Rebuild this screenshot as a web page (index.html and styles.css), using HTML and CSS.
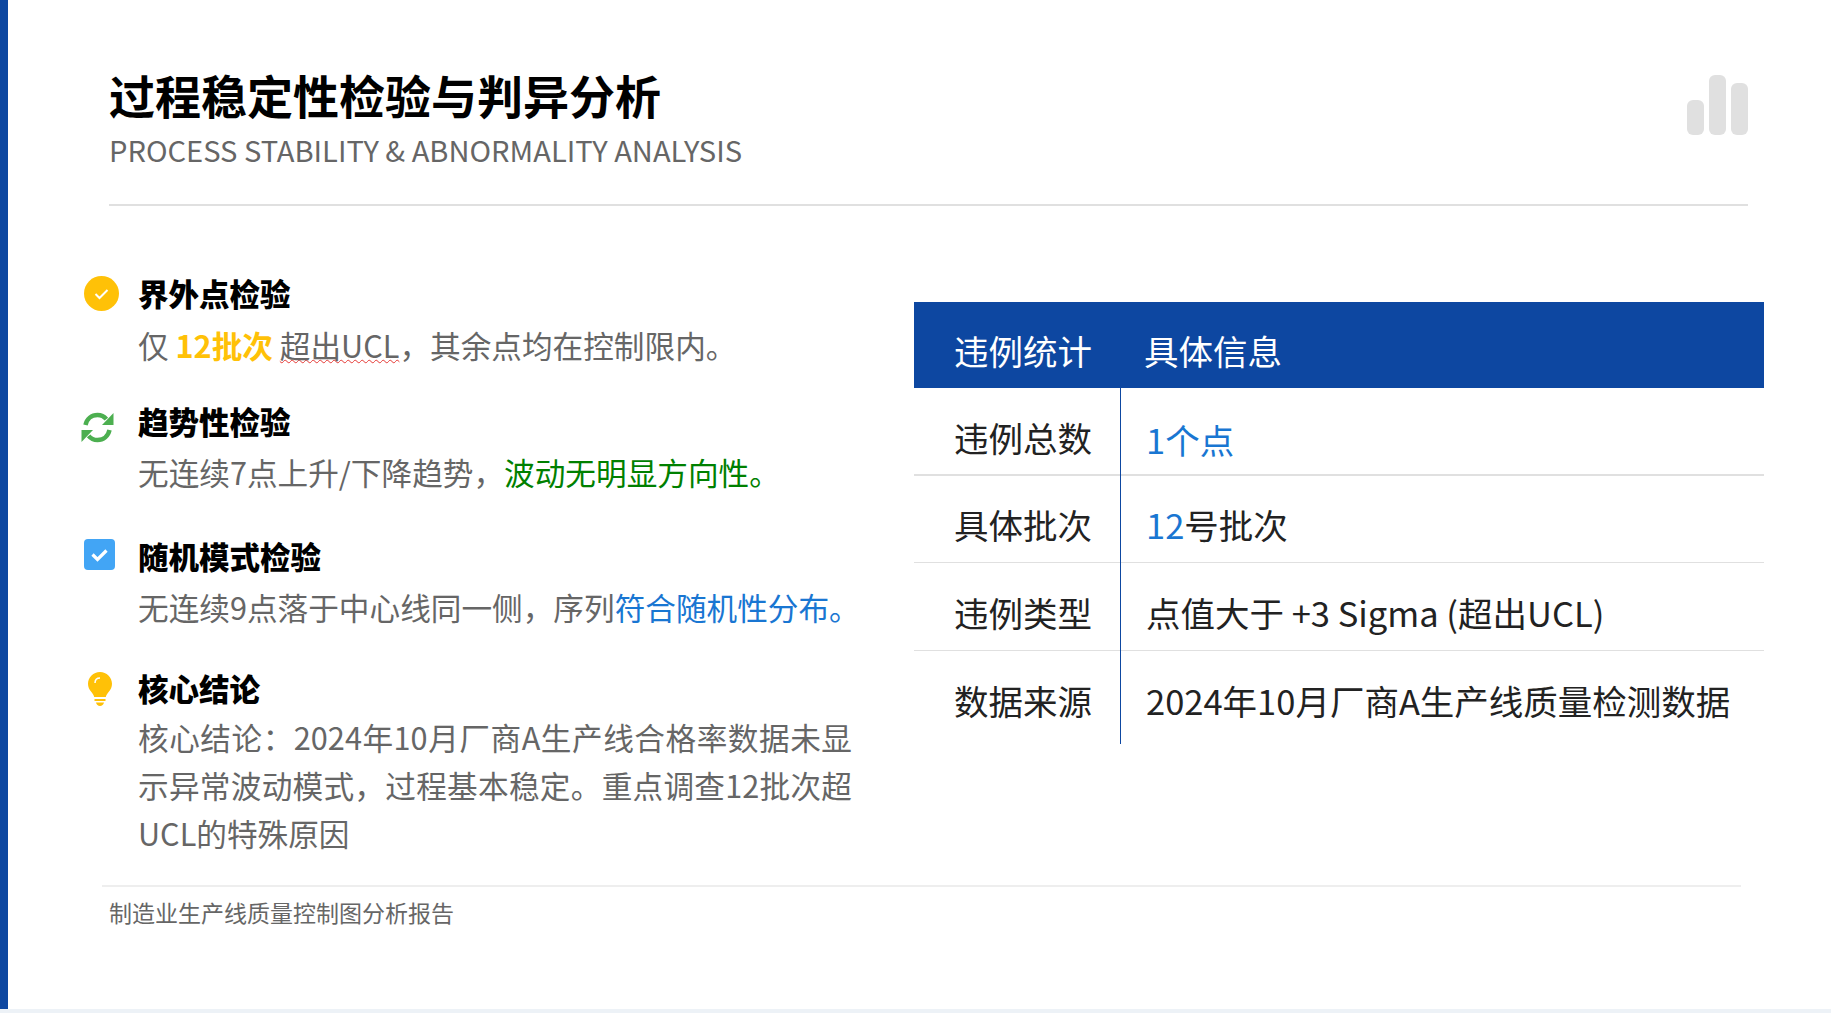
FILE: index.html
```html
<!DOCTYPE html>
<html lang="zh-CN">
<head>
    <meta charset="UTF-8">
    <title>过程稳定性检验与判异分析</title>
    <link rel="stylesheet" href="styles.css">
</head>
<body>
    <div class="slide">
        <div class="slide-header">
            <div>
                <h1>过程稳定性检验与判异分析</h1>
                <div class="subtitle">PROCESS STABILITY &amp; ABNORMALITY ANALYSIS</div>
            </div>
            <svg class="header-icon" viewBox="0 0 61 60">
                <rect x="0" y="25" width="17" height="35" rx="6"/>
                <rect x="22" y="0" width="17" height="60" rx="6"/>
                <rect x="44" y="8" width="17" height="52" rx="6"/>
            </svg>
        </div>

        <div class="slide-body">
            <div class="checks">
                <div class="check check-first">
                    <svg class="check-icon icon-circle" viewBox="0 0 35 35">
                        <circle cx="17.5" cy="17.5" r="17.5" fill="#ffc107"/>
                        <path d="M11.5 18l4 4 8-8" fill="none" stroke="#fff" stroke-width="2"/>
                    </svg>
                    <h3>界外点检验</h3>
                    <p>仅 <strong class="yellow">12批次</strong> <span class="squiggle">超出UCL</span>，其余点均在控制限内。</p>
                </div>
                <div class="check check-second">
                    <svg class="check-icon icon-sync" viewBox="0 0 33 31">
                        <path d="M4.5 13C5.800 7 10.600 3 16.500 3c3.600 0 6.700 1.500 8.900 4.200" fill="none" stroke="#4caf50" stroke-width="4.500"/>
                        <path d="M32.500 1v12H21z" fill="#4caf50"/>
                        <path d="M28.500 18C27.200 24 22.400 28 16.500 28c-3.600 0-6.700-1.500-8.900-4.200" fill="none" stroke="#4caf50" stroke-width="4.500"/>
                        <path d="M0.500 30V18H12z" fill="#4caf50"/>
                    </svg>
                    <h3>趋势性检验</h3>
                    <p>无连续7点上升/下降趋势，<span class="green">波动无明显方向性。</span></p>
                </div>
                <div class="check check-third">
                    <svg class="check-icon icon-box" viewBox="0 0 31 31">
                        <rect width="31" height="31" rx="4" fill="#42a5f5"/>
                        <path d="M8.500 15.500l5 5 9-9" fill="none" stroke="#fff" stroke-width="3.200"/>
                    </svg>
                    <h3>随机模式检验</h3>
                    <p>无连续9点落于中心线同一侧，序列<span class="blue">符合随机性分布。</span></p>
                </div>
                <div class="check check-fourth">
                    <svg class="check-icon icon-bulb" viewBox="0 0 24 34">
                        <path d="M12 0C5.400 0 0 5.300 0 11.800c0 3.300 1.300 5.800 3.200 8 1.300 1.500 2.500 3.200 3 5.200h11.600c.5-2 1.700-3.700 3-5.200 1.900-2.200 3.200-4.700 3.200-8C24 5.300 18.600 0 12 0z" fill="#ffc107"/>
                        <path d="M6.500 27h11v2h-11zM8 30.500h8C15.500 32.600 14 34 12 34s-3.500-1.400-4-3.500z" fill="#ffc107"/>
                        <path d="M7 11c0-3 2-5 5-5" fill="none" stroke="#fff" stroke-width="1.500"/>
                    </svg>
                    <h3>核心结论</h3>
                    <p>核心结论：2024年10月厂商A生产线合格率数据未显示异常波动模式，过程基本稳定。重点调查12批次超UCL的特殊原因</p>
                </div>
            </div>

            <table class="stats">
                <thead>
                    <tr><th>违例统计</th><th>具体信息</th></tr>
                </thead>
                <tbody>
                    <tr class="row-first"><td>违例总数</td><td class="blue-strong">1个点</td></tr>
                    <tr><td>具体批次</td><td><span class="blue-strong">12</span>号批次</td></tr>
                    <tr class="row-third"><td>违例类型</td><td>点值大于 +3 Sigma (超出UCL)</td></tr>
                    <tr class="row-last"><td>数据来源</td><td>2024年10月厂商A生产线质量检测数据</td></tr>
                </tbody>
            </table>
        </div>

        <div class="slide-footer">制造业生产线质量控制图分析报告</div>
    </div>
</body>
</html>
```

FILE: styles.css
```css
* {
    box-sizing: border-box;
}
body {
    margin: 0;
    height: 1013px;
    background-color: #edf2f7;
    font-family: "Noto Sans CJK SC", "Noto Sans", sans-serif;
    overflow: hidden;
}
.slide {
    width: 1831px;
    height: 1009px;
    background: white;
    border-left: 8px solid #0d47a1;
}
.slide-header {
    margin: 0 83px 0 101px;
    height: 206px;
    padding-top: 64px;
    border-bottom: 2px solid #e0e0e0;
    display: flex;
    justify-content: space-between;
}
h1 {
    margin: 0;
    font-size: 46px;
    line-height: 60px;
    font-weight: 700;
    color: #000;
}
.subtitle {
    margin-top: 5px;
    font-size: 29.1px;
    line-height: 40px;
    color: #666;
}
.header-icon {
    width: 61px;
    height: 60px;
    margin-top: 11px;
    fill: #e0e0e0;
}
.slide-body {
    display: flex;
    padding-left: 76px;
    height: 679px;
}
.checks {
    flex: none;
    width: 830px;
    padding-top: 63px;
}
.check {
    position: relative;
    padding-left: 54px;
}
.check-first {
    margin-bottom: 28px;
}
.check-first h3 {
    margin-bottom: 4px;
}
.check-second {
    margin-bottom: 36px;
}
.check-second h3 {
    margin-bottom: 3px;
}
.check-third {
    margin-bottom: 33px;
}
.check-third h3 {
    margin-bottom: 3px;
}
.check-fourth {
    padding-right: 62px;
}
.check-fourth h3 {
    margin-bottom: 1px;
}
.check-fourth p {
    text-align: justify;
}
.check-icon {
    position: absolute;
}
.icon-circle {
    left: 0;
    top: 7px;
    width: 35px;
    height: 35px;
}
.icon-sync {
    left: -3px;
    top: 15px;
    width: 33px;
    height: 31px;
}
.icon-box {
    left: 0;
    top: 7px;
    width: 31px;
    height: 31px;
}
.icon-bulb {
    left: 4px;
    top: 8px;
    width: 24px;
    height: 34px;
}
h3 {
    margin: 0;
    font-size: 30.5px;
    line-height: 48px;
    font-weight: 900;
    color: #000;
}
.check p {
    margin: 0;
    font-size: 30.65px;
    line-height: 48px;
    color: #666;
}
.yellow {
    color: #ffc107;
}
.green {
    color: #008000;
}
.blue {
    color: #1976d2;
}
.squiggle {
    text-decoration: underline wavy #e53935 1px;
}
.stats {
    flex: none;
    width: 850px;
    align-self: flex-start;
    margin-top: 96px;
    border-spacing: 0;
    font-size: 34.5px;
    color: #222;
    table-layout: fixed;
}
.stats th {
    height: 86px;
    padding: 9px 0 0 23px;
    text-align: left;
    font-weight: 400;
    color: white;
    background-color: #0d47a1;
}
.stats th:first-child, .stats td:first-child {
    width: 207px;
    padding-left: 40px;
}
.stats td {
    height: 87px;
    padding: 10px 0 0 25px;
    border-bottom: 1px solid #e0e0e0;
}
.stats td:first-child {
    position: relative;
}
/* the column rule runs over the row lines */
.stats td:first-child::after {
    content: "";
    position: absolute;
    top: 0;
    bottom: -2px;
    right: 0;
    width: 1px;
    background-color: #0d47a1;
}
.row-first td {
    height: 88px;
    padding-top: 12px;
    border-bottom-width: 2px;
}
.row-first td:last-child {
    padding-top: 15px;
}
.row-third td {
    height: 88px;
}
.row-last td {
    height: 93px;
    padding-top: 4px;
    border-bottom: none;
}
.stats .row-last td:first-child::after {
    bottom: 0;
}
.blue-strong {
    color: #1976d2;
}
.slide-footer {
    margin: 0 90px 0 94px;
    padding: 5px 0 0 7px;
    border-top: 2px solid #eeeeee;
    font-size: 23px;
    line-height: 40px;
    color: #666;
}
```
